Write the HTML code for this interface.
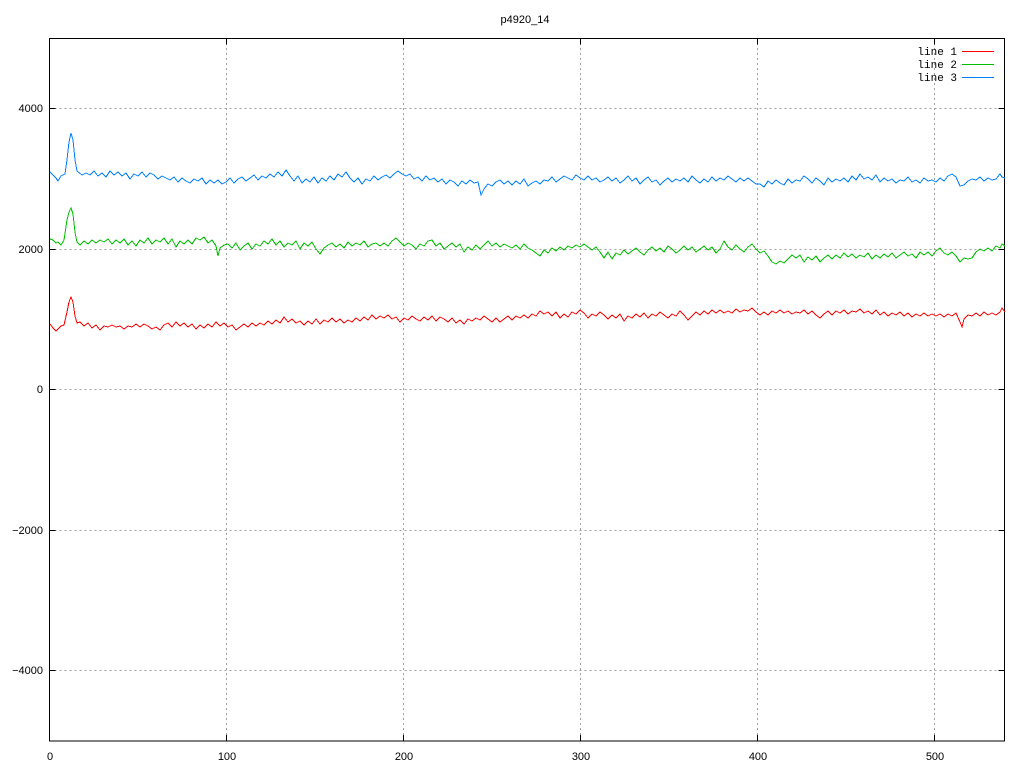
<!DOCTYPE html>
<html><head><meta charset="utf-8"><style>
html,body{margin:0;padding:0;background:#fff;}
svg{display:block;}
text{font-family:"Liberation Sans",sans-serif;font-size:11px;fill:#000;}
text.m{font-family:"Liberation Mono",monospace;font-size:11px;}
</style></head><body>
<svg width="1024" height="768" viewBox="0 0 1024 768" xmlns="http://www.w3.org/2000/svg">
<rect width="1024" height="768" fill="#fff"/>
<g stroke="#a0a0a0" stroke-width="1" stroke-dasharray="2,3" fill="none" shape-rendering="crispEdges">
<path d="M49.5 108.5H1005M49.5 249.5H1005M49.5 389.5H1005M49.5 530.5H1005M49.5 670.5H1005"/>
<path d="M226.5 38V741M403.5 38V741M580.5 38V741M757.5 38V741M934.5 38V741"/>
</g>
<g stroke="#000" stroke-width="1" fill="none" shape-rendering="crispEdges">
<rect x="49.5" y="38.5" width="955" height="702.5"/>
<path d="M49.5 108.5h6M49.5 249.5h6M49.5 389.5h6M49.5 530.5h6M49.5 670.5h6M1004.5 108.5h-6M1004.5 249.5h-6M1004.5 389.5h-6M1004.5 530.5h-6M1004.5 670.5h-6"/>
<path d="M226.5 741v-6M403.5 741v-6M580.5 741v-6M757.5 741v-6M934.5 741v-6M226.5 38.5v6M403.5 38.5v6M580.5 38.5v6M757.5 38.5v6M934.5 38.5v6"/>
</g>
<g text-anchor="end">
<text x="43" y="112">4000</text>
<text x="43" y="253">2000</text>
<text x="43" y="393">0</text>
<text x="43" y="534">−2000</text>
<text x="43" y="674">−4000</text>
</g>
<g text-anchor="middle">
<text x="50" y="760">0</text>
<text x="227" y="760">100</text>
<text x="404" y="760">200</text>
<text x="581" y="760">300</text>
<text x="758" y="760">400</text>
<text x="935" y="760">500</text>
<text x="525" y="23">p4920_14</text>
</g>
<g text-anchor="end">
<text class="m" x="957" y="55">line 1</text>
<text class="m" x="957" y="68">line 2</text>
<text class="m" x="957" y="81">line 3</text>
</g>
<path d="M962 51.5h32" stroke="#ff0000" shape-rendering="crispEdges"/>
<path d="M962 64.5h32" stroke="#00c000" shape-rendering="crispEdges"/>
<path d="M962 77.5h32" stroke="#0080ff" shape-rendering="crispEdges"/>
<g fill="none" stroke-width="1" shape-rendering="crispEdges">
<polyline stroke="#0080ff" points="50,172 53,175 56,178 58,181 61,176 65,174 67,160 69,142 71,133 73,140 75,160 77,171 82,175 86,173 90,175 94,171 98,176 102,173 106,177 110,171 114,175 118,172 122,176 126,173 130,179 134,174 138,176 142,172 146,177 150,173 154,175 158,179 162,176 166,178 170,180 174,177 178,182 182,178 186,181 190,183 194,179 198,181 202,178 206,184 210,180 214,183 218,180 222,184 226,182 230,178 234,183 238,179 242,177 246,181 250,178 254,175 258,180 262,176 266,178 270,174 274,177 278,172 282,176 286,170 290,176 294,181 298,176 302,183 306,179 310,182 314,177 318,183 322,178 326,181 330,176 334,180 338,174 342,177 346,172 350,178 354,182 358,178 362,184 366,179 370,181 374,176 378,180 382,177 386,175 390,178 394,174 398,171 402,174 406,176 410,174 414,179 418,177 422,181 426,176 430,180 434,178 438,182 442,179 446,184 450,180 454,182 458,186 462,181 466,184 470,180 474,183 478,182 481,195 484,189 488,184 492,186 496,182 500,180 504,184 508,181 512,185 516,181 520,184 524,179 528,186 532,183 536,181 540,184 544,180 548,181 552,177 556,182 560,179 564,176 568,178 572,180 576,175 580,178 584,180 588,176 592,180 596,178 600,182 604,180 608,177 612,181 616,178 620,183 624,180 628,176 632,181 636,178 640,184 644,180 648,177 652,182 656,180 660,185 664,181 668,178 672,182 676,179 680,181 684,178 688,182 692,176 696,180 700,183 704,179 708,182 712,177 716,181 720,178 724,180 728,176 732,179 736,182 740,178 744,181 748,178 752,181 756,184 760,184 764,187 768,181 772,184 776,180 780,183 784,185 788,179 792,183 796,180 800,181 804,176 808,179 812,183 816,178 820,181 824,185 828,178 832,182 836,179 840,181 844,178 848,182 852,176 856,180 860,174 864,179 868,177 872,180 876,175 880,182 884,178 888,181 892,179 896,183 900,180 904,181 908,177 912,182 916,180 920,183 924,178 928,181 932,180 936,182 940,178 944,181 948,176 952,174 956,177 960,186 964,185 968,181 972,179 976,180 980,177 984,181 988,178 992,180 996,179 1000,174 1002,177 1005,178"/>
<polyline stroke="#00c000" points="50,239 53,240 56,243 58,242 61,245 64,240 67,220 69,212 71,208 73,214 75,232 77,242 80,245 84,241 88,244 92,240 96,243 100,240 104,242 108,239 112,244 116,240 120,243 124,239 128,245 132,241 136,246 140,240 144,243 148,238 152,244 156,240 160,242 164,238 168,244 172,239 176,247 180,241 184,244 188,240 192,244 196,238 200,240 204,237 208,243 212,240 216,246 218,256 220,248 224,245 228,244 232,248 236,243 240,250 244,246 248,243 252,249 256,244 260,246 264,241 268,244 272,239 276,245 280,241 284,247 288,243 292,245 296,241 300,249 304,243 308,246 312,242 316,249 320,254 324,248 328,245 332,243 336,247 340,244 344,248 348,242 352,246 356,243 360,245 364,241 368,247 372,244 376,243 380,246 384,243 388,246 392,241 396,238 400,242 404,246 408,243 412,245 416,249 420,244 424,246 428,241 432,240 436,246 440,243 444,249 448,246 452,243 456,247 460,244 464,252 468,247 472,250 476,245 480,249 484,245 488,241 492,246 496,243 500,247 504,244 508,246 512,248 516,245 520,249 524,244 528,248 532,250 536,253 540,256 544,250 548,253 552,248 556,251 560,247 564,250 568,246 572,248 576,245 580,247 584,244 588,247 592,250 596,247 600,252 604,258 608,252 612,259 616,253 620,255 624,250 628,254 632,251 636,248 640,252 644,255 648,250 652,247 656,251 660,248 664,252 668,246 672,249 676,253 680,250 684,246 688,250 692,247 696,252 700,249 704,246 708,250 712,247 716,253 720,249 724,241 728,247 732,250 736,245 740,249 744,252 748,247 752,244 756,249 760,253 764,251 768,256 772,262 776,264 780,261 784,263 788,259 792,255 796,258 800,255 804,262 808,257 812,260 816,256 820,262 824,258 828,255 832,259 836,255 840,258 844,253 848,257 852,254 856,258 860,255 864,257 868,253 872,259 876,255 880,258 884,254 888,257 892,253 896,258 900,255 904,252 908,256 912,254 916,258 920,252 924,255 928,252 932,256 936,251 940,248 944,253 948,255 952,252 956,256 960,262 964,258 968,259 972,258 976,252 980,249 984,251 988,248 992,251 996,246 1000,248 1002,244 1005,246"/>
<polyline stroke="#ff0000" points="50,324 53,328 56,331 58,329 61,326 64,325 67,312 69,302 71,297 73,302 75,316 77,323 80,322 84,326 88,323 92,328 96,325 100,330 104,326 108,327 112,325 116,327 120,326 124,329 128,326 132,327 136,324 140,327 144,324 148,326 152,329 156,327 160,330 164,325 168,323 172,327 176,322 180,326 184,323 188,327 192,324 196,329 200,325 204,328 208,324 212,327 216,322 220,326 224,323 228,327 232,325 236,330 240,327 244,324 248,327 252,323 256,326 260,323 264,325 268,321 272,324 276,320 280,323 284,317 288,322 292,319 296,323 300,321 304,325 308,321 312,324 316,319 320,324 324,320 328,322 332,318 336,322 340,319 344,323 348,320 352,322 356,318 360,321 364,317 368,320 372,315 376,319 380,316 384,318 388,315 392,319 396,317 400,322 404,318 408,320 412,316 416,319 420,321 424,317 428,320 432,316 436,321 440,317 444,319 448,322 452,318 456,323 460,320 464,324 468,319 472,321 476,318 480,320 484,316 488,319 492,322 496,318 500,322 504,319 508,316 512,320 516,316 520,318 524,315 528,318 532,314 536,316 540,311 544,314 548,312 552,316 556,312 560,318 564,314 568,317 572,312 576,314 580,310 584,313 588,318 592,314 596,316 600,312 604,315 608,319 612,315 616,318 620,314 624,321 628,316 632,318 636,314 640,317 644,313 648,318 652,314 656,316 660,312 664,315 668,318 672,314 676,316 680,311 684,315 688,320 692,316 696,312 700,315 704,311 708,314 712,310 716,313 720,310 724,313 728,311 732,313 736,309 740,312 744,310 748,311 752,308 756,312 760,315 764,312 768,315 772,311 776,313 780,310 784,313 788,311 792,314 796,312 800,313 804,310 808,314 812,311 816,315 820,318 824,314 828,311 832,315 836,311 840,313 844,310 848,314 852,311 856,312 860,309 864,313 868,311 872,314 876,310 880,315 884,312 888,316 892,313 896,315 900,312 904,316 908,313 912,317 916,314 920,316 924,313 928,316 932,314 936,316 940,314 944,317 948,314 952,316 956,313 960,322 962,327 964,319 968,315 972,316 976,313 980,316 984,312 988,315 992,313 996,315 1000,312 1002,308 1005,312"/>
</g>
</svg>
</body></html>
